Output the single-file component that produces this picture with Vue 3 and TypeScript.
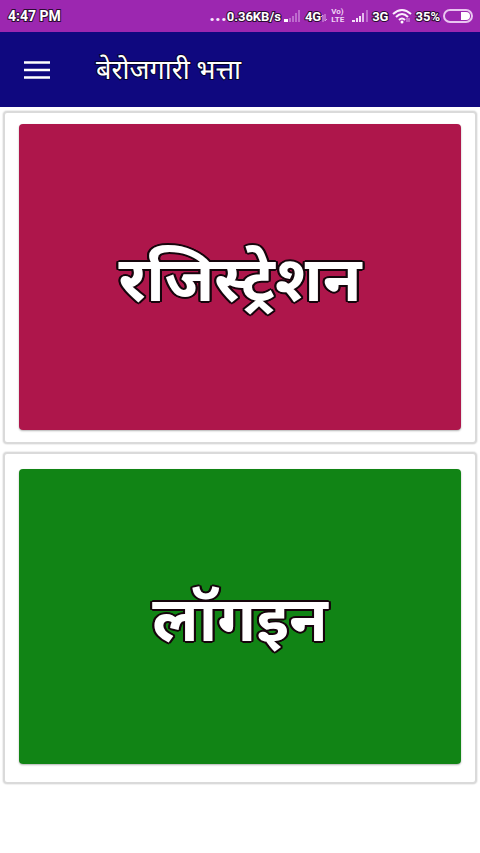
<script setup lang="ts">
interface Tile {
  id: string
  label: string
}

const title = 'बेरोजगारी भत्ता'
const tiles: Tile[] = [
  { id: 'register', label: 'रजिस्ट्रेशन' },
  { id: 'login', label: 'लॉगइन' },
]
</script>

<template>
  <div class="screen">
    <div class="status">
      <span class="clock">4:47 PM</span>
      <span class="dots">...</span>
      <span class="rate">0.36KB/s</span>
      <svg class="signal first" width="18" height="16" viewBox="0 0 18 16" aria-hidden="true">
        <path d="M0 14v-3h4v3z" fill="#fff" />
        <path d="M5 14v-4h2v4zM8 14V8h2v6zM11 14V5h2v9zM14 14V2h2v12z" fill="#bd6bcd" />
      </svg>
      <span class="net">4G</span>
      <svg class="arrows" width="6" height="10" viewBox="0 0 6 10" aria-hidden="true">
        <path d="M2 9V2L0 4M4 1v7l2-2" fill="none" stroke="#d9a6e3" />
      </svg>
      <span class="volte"><span>Vo)</span><span>LTE</span></span>
      <svg class="signal" width="18" height="16" viewBox="0 0 18 16" aria-hidden="true">
        <path d="M0 14v-2h3v2zM4 14v-4h2v4zM7 14V8h2v6z" fill="#f4dff8" />
        <path d="M10 14V5h2v9z" fill="#e3b8ec" />
        <path d="M14 14V2h2v12z" fill="#bd6bcd" />
      </svg>
      <span class="net">3G</span>
      <svg class="wifi" width="20" height="16" viewBox="0 0 20 16" aria-hidden="true">
        <g fill="none" stroke="#fbeffd" stroke-width="2">
          <path d="M1 6Q10-2 19 6" />
          <path d="M4 9Q10 3 16 9" />
          <path d="M7 12Q10 9 13 12" />
        </g>
        <circle cx="10" cy="14" r="1.5" fill="#fff" />
        <path d="M15 14v-4M17 10v4" stroke="#d9a6e3" />
      </svg>
      <span class="percent">35%</span>
      <svg class="battery" width="30" height="14" viewBox="0 0 30 14" aria-hidden="true">
        <rect x="1" y="1" width="28" height="12" rx="6" fill="none" stroke="#e9c6f0" stroke-width="2" />
        <path d="M18 3h5a4 4 0 0 1 0 8h-5z" fill="#fff" />
      </svg>
    </div>

    <header class="toolbar">
      <button class="menu" type="button" aria-label="Menu">
        <svg width="26" height="18" viewBox="0 0 26 18" aria-hidden="true">
          <path d="M0 1.5h26M0 9h26M0 16.5h26" stroke="#fff" stroke-width="2.5" />
        </svg>
      </button>
      <h1>{{ title }}</h1>
    </header>

    <main class="cards">
      <section v-for="tile in tiles" :key="tile.id" class="card" :class="tile.id">
        <button class="tile" type="button">{{ tile.label }}</button>
      </section>
    </main>
  </div>
</template>

<style>
body {
  background: #fff;
}
</style>

<style scoped>
.screen {
  font-family: Roboto, "Noto Sans", sans-serif;
  color: #fff;
}

.status {
  display: flex;
  align-items: center;
  height: 32px;
  padding: 0 7px 0 8px;
  background: #9c27b0;
  font-size: 13px;
  font-weight: 700;
  white-space: nowrap;
  -webkit-text-stroke: 2px #2c0a33;
  paint-order: stroke fill;
}

.status svg {
  flex: none;
}

.clock {
  margin-right: auto;
  font-size: 14px;
}

.dots {
  margin-bottom: 4px;
  font-size: 20px;
  line-height: 20px;
  color: #fbe6ff;
  -webkit-text-stroke: 0;
}

.signal {
  margin: 0 2px;
}

.signal.first {
  margin: 0 3px;
}

.arrows {
  margin: 4px 4px 0 0;
}

.volte {
  display: flex;
  flex-direction: column;
  margin-right: 6px;
  font-size: 8px;
  line-height: 8px;
  color: #f0d5f5;
  -webkit-text-stroke: 0;
}

.wifi {
  margin: 0 3px 0 4px;
}

.battery {
  margin-left: 3px;
}

.toolbar {
  display: flex;
  align-items: center;
  height: 75px;
  padding: 0 24px;
  background: #0f087f;
}

.menu {
  display: flex;
  padding: 0;
  border: 0;
  background: none;
}

h1 {
  margin: 0 0 0 46px;
  font-size: 27px;
  font-weight: 400;
  line-height: 40px;
  -webkit-text-stroke: 2px #05032c;
  paint-order: stroke fill;
}

.cards {
  display: flex;
  flex-direction: column;
  gap: 8px;
  padding: 4px 3px;
}

.card {
  display: flex;
  padding: 11px 14px 12px;
  border: 2px solid #dadada;
  border-radius: 4px;
  background: #fff;
  box-shadow: 0 0 1px 1px #f0f0f0;
}

.card.login {
  padding: 15px 14px 18px;
}

.tile {
  flex: 1;
  min-height: 306px;
  padding: 0;
  border: 0;
  border-radius: 4px;
  background: #ae164b;
  box-shadow: 0 1px 2px rgba(0, 0, 0, 0.3);
  color: #fff;
  font-family: "Noto Sans", sans-serif;
  font-size: 63px;
  font-weight: 700;
  line-height: 80px;
  text-shadow:
    2px 0 #16050c, -2px 0 #16050c, 0 2px #16050c, 0 -2px #16050c,
    1px 1px #16050c, -1px 1px #16050c, 1px -1px #16050c, -1px -1px #16050c,
    2px 1px #16050c, -2px 1px #16050c, 2px -1px #16050c, -2px -1px #16050c;
}

.login .tile {
  min-height: 295px;
  background: #118415;
}
</style>
